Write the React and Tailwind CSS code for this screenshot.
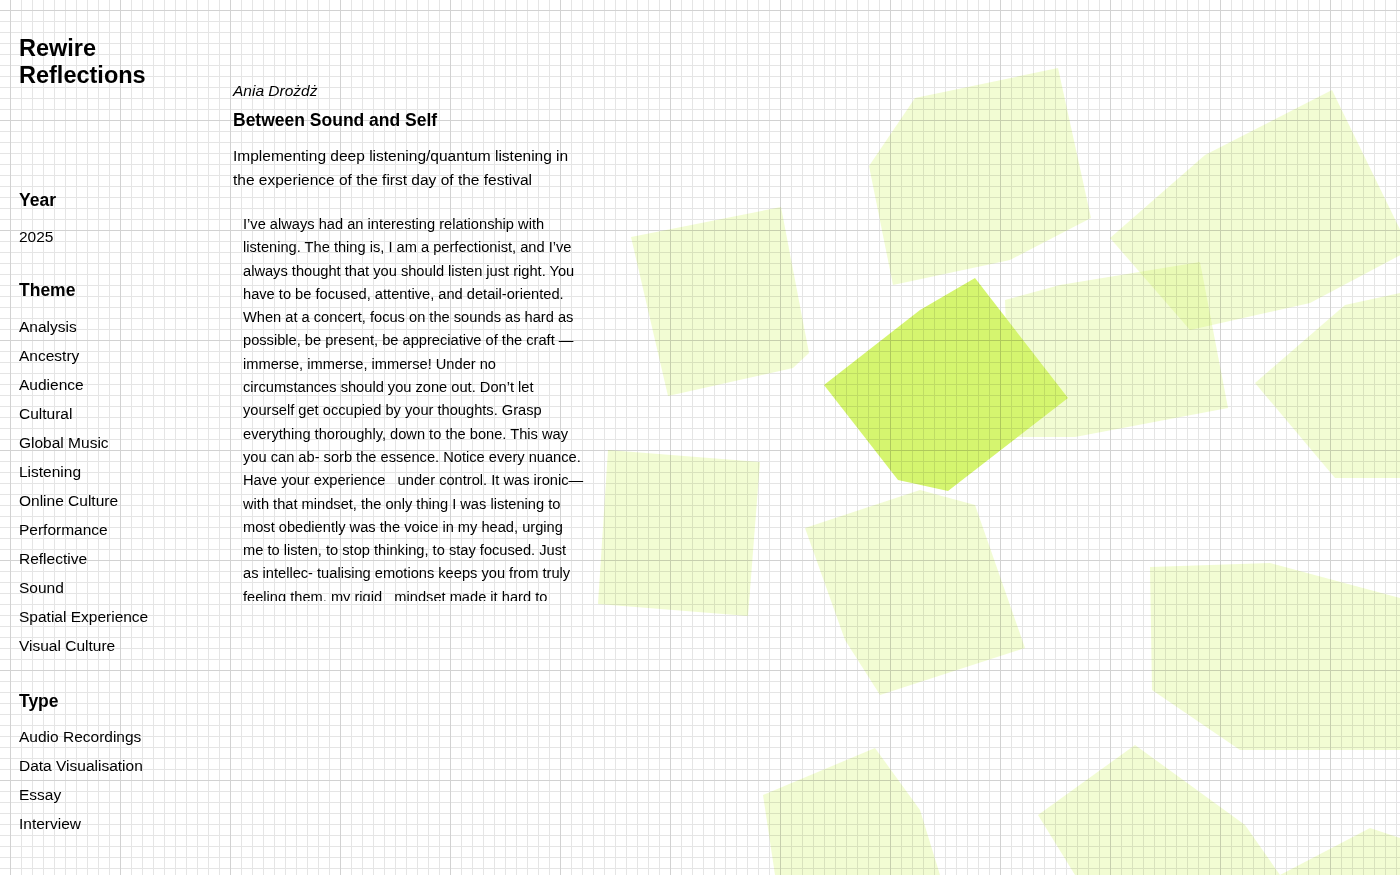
import React from "react";

const themes = [
  "Analysis",
  "Ancestry",
  "Audience",
  "Cultural",
  "Global Music",
  "Listening",
  "Online Culture",
  "Performance",
  "Reflective",
  "Sound",
  "Spatial Experience",
  "Visual Culture",
];

const types = ["Audio Recordings", "Data Visualisation", "Essay", "Interview"];

const body =
  "I’ve always had an interesting relationship with listening. The thing is, I am a perfectionist, and I’ve always thought that you should listen just right. You have to be focused, attentive, and detail-oriented. When at a concert, focus on the sounds as hard as possible, be present, be appreciative of the craft — immerse, immerse, immerse! Under no circumstances should you zone out. Don’t let yourself get occupied by your thoughts. Grasp everything thoroughly, down to the bone. This way you can ab- sorb the essence. Notice every nuance. Have your experience   under control. It was ironic—with that mindset, the only thing I was listening to most obediently was the voice in my head, urging me to listen, to stop thinking, to stay focused. Just as intellec- tualising emotions keeps you from truly feeling them. my rigid   mindset made it hard to actually hear what was happening around me.";

// light shapes scattered on the canvas
const shapes = [
  "915,98 1058,68 1091,218 1010,260 893,285 869,166",
  "1110,238 1205,155 1332,90 1410,250 1310,303 1190,330",
  "1005,300 1060,285 1200,262 1228,408 1075,437 1010,437",
  "631,237 781,207 809,353 793,368 668,396",
  "1255,383 1345,305 1400,293 1400,478 1335,478",
  "608,450 760,462 748,616 598,604",
  "805,528 920,490 975,505 1025,648 880,695 845,640",
  "1150,567 1270,563 1400,598 1400,750 1240,750 1152,690",
  "763,795 875,748 920,810 940,875 775,875",
  "1038,815 1135,745 1245,825 1280,875 1075,875",
  "1280,875 1370,828 1400,838 1400,875",
];

function Group({ title, items, className = "" }) {
  return (
    <div className={className}>
      <h3 className="text-[17.5px] font-bold leading-[24px]">{title}</h3>
      <ul className="mt-[9.5px]">
        {items.map((item) => (
          <li key={item} className="text-[15.5px] leading-[29px]">
            {item}
          </li>
        ))}
      </ul>
    </div>
  );
}

export default function App() {
  return (
    <div
      className="relative h-[875px] w-full overflow-hidden bg-white text-black bg-[linear-gradient(to_right,#d2d2d2_1px,transparent_1px),linear-gradient(to_bottom,#d2d2d2_1px,transparent_1px),linear-gradient(to_right,#e5e5e5_1px,transparent_1px),linear-gradient(to_bottom,#e5e5e5_1px,transparent_1px)] bg-size-[110px_110px,110px_110px,11px_11px,11px_11px] bg-position-[10px_10px]"
      style={{ fontFamily: '"Liberation Sans", Arial, sans-serif' }}
    >
      {/* polygon drawing */}
      <svg
        className="absolute inset-0 mix-blend-multiply pointer-events-none"
        width="1400"
        height="875"
        viewBox="0 0 1400 875"
      >
        {shapes.map((p, i) => (
          <polygon key={i} points={p} fill="#d4f46e" fillOpacity="0.3" />
        ))}
        <polygon
          points="824,385 920,310 975,278 1068,398 948,491 898,480"
          fill="#d5f56f"
        />
      </svg>

      <div className="relative flex pl-[19px]">
        <aside className="w-[214px] shrink-0">
          <h1 className="mt-[35px] text-[23.5px] font-bold leading-[27px]">
            Rewire
            <br />
            Reflections
          </h1>
          <Group title="Year" items={["2025"]} className="mt-[99px]" />
          <Group title="Theme" items={themes} className="mt-[27.5px]" />
          <Group title="Type" items={types} className="mt-[29px]" />
        </aside>

        <main className="w-[360px] shrink-0 pt-[79px]">
          <p className="text-[15.5px] italic leading-[24px]">Ania Drożdż</p>
          <h2 className="mt-[5px] text-[17.5px] font-bold leading-[24px]">
            Between Sound and Self
          </h2>
          <p className="mt-[12px] w-[352px] text-[15.5px] leading-[24px]">
            Implementing deep listening/quantum listening in the experience of
            the first day of the festival
          </p>
          <div className="mt-[21px] h-[388px] overflow-hidden pl-[10px]">
            <p className="w-[342px] whitespace-pre-wrap text-[14.65px] leading-[23.3px]">
              {body}
            </p>
          </div>
        </main>
      </div>
    </div>
  );
}
